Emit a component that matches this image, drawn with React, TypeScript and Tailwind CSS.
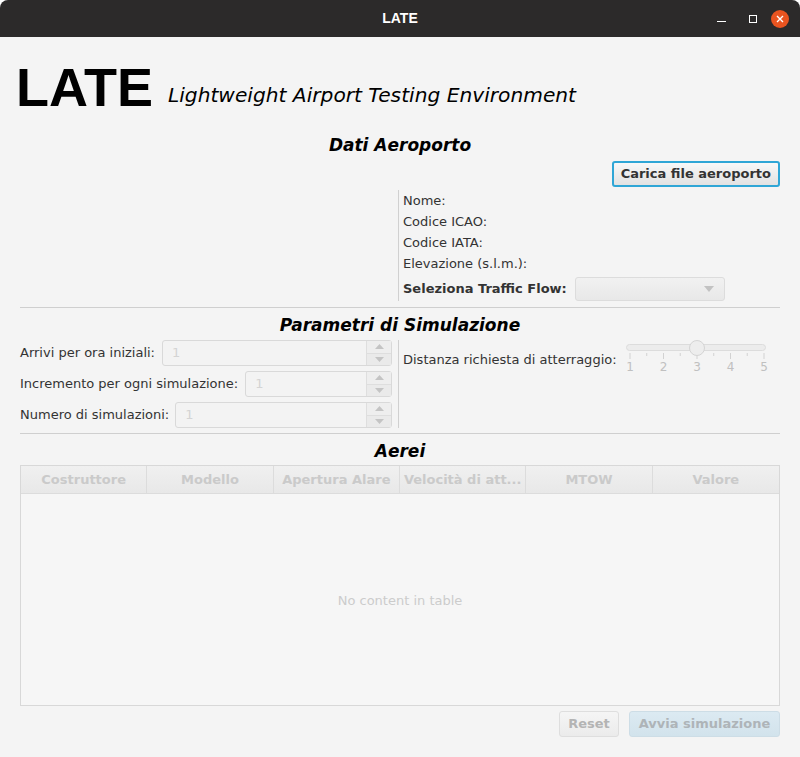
import React from 'react';

const body = "font-['DejaVu_Sans',sans-serif]";

function SpinnerBox({ className }: { className: string }) {
    return (
        <div className={`flex h-[26px] rounded-[3px] border border-[#d9d9d9] bg-[#f3f3f3] ${className}`}>
            <div className="flex flex-1 items-center pl-[9px] text-[13px] text-[#d4d4d4]">1</div>
            <div className="flex w-[25px] flex-col border-l border-[#dedede]">
                <div className="flex flex-1 items-center justify-center border-b border-[#dedede] bg-[#eeeeee]">
                    <svg width="9" height="5" viewBox="0 0 9 5"><path d="M0 5 L4.5 0 L9 5 Z" fill="#c4c4c4" /></svg>
                </div>
                <div className="flex flex-1 items-center justify-center bg-[#eaeaea]">
                    <svg width="9" height="5" viewBox="0 0 9 5"><path d="M0 0 L4.5 5 L9 0 Z" fill="#c4c4c4" /></svg>
                </div>
            </div>
        </div>
    );
}

function SectionTitle({ children }: { children: React.ReactNode }) {
    return (
        <div className="h-[20px] text-center text-[17px] leading-[20px] font-bold italic text-black">{children}</div>
    );
}

const columns = ['Costruttore', 'Modello', 'Apertura Alare', 'Velocità di att...', 'MTOW', 'Valore'];

export default function App() {
    return (
        <div className={`flex h-[757px] w-[800px] flex-col overflow-hidden rounded-t-[8px] bg-[#f4f4f4] ${body}`}>
            {/* Title bar */}
            <div className="relative flex h-[37px] shrink-0 items-center justify-center bg-[#2c2a2a]">
                <span className="font-['Liberation_Sans',sans-serif] text-[14px] font-bold text-white">LATE</span>
                <div className="absolute right-[11px] top-0 flex h-[37px] items-center">
                    <div className="flex w-[32px] justify-center">
                        <div className="mt-[6px] h-[1.5px] w-[9px] bg-white" />
                    </div>
                    <div className="flex w-[32px] justify-center">
                        <div className="h-[8px] w-[8px] border border-white" />
                    </div>
                    <div className="ml-[2px] flex h-[18px] w-[18px] items-center justify-center rounded-full bg-[#e95420]">
                        <svg width="8" height="8" viewBox="0 0 8 8">
                            <path d="M1 1 L7 7 M7 1 L1 7" stroke="white" strokeWidth="1.4" />
                        </svg>
                    </div>
                </div>
            </div>

            <div className="flex flex-1 flex-col px-5 text-[13px] text-[#333333]">
                {/* Header */}
                <div className="mt-[23px] flex items-end">
                    <span className="-ml-[4px] font-['Liberation_Sans',sans-serif] text-[54px] leading-[54px] font-bold text-black">LATE</span>
                    <span className="mb-[7px] ml-[15px] text-[20.2px] leading-[24px] italic text-black">Lightweight Airport Testing Environment</span>
                </div>

                {/* Dati Aeroporto */}
                <div className="mt-[21px]">
                    <SectionTitle>Dati Aeroporto</SectionTitle>
                </div>
                <div className="mt-[6px] flex justify-end">
                    <button className="h-[26px] rounded-[3px] border-2 border-[#2fa6d6] bg-gradient-to-b from-[#f8f8f8] to-[#e2e2e2] px-[7px] text-[13px] font-bold text-[#333333]">
                        Carica file aeroporto
                    </button>
                </div>
                <div className="mt-[3px] flex">
                    <div className="w-[378px]" />
                    <div className="flex flex-col border-l border-[#d0d0d0] pl-[4px]">
                        <div className="h-[21px] leading-[21px]">Nome:</div>
                        <div className="h-[21px] leading-[21px]">Codice ICAO:</div>
                        <div className="h-[21px] leading-[21px]">Codice IATA:</div>
                        <div className="h-[21px] leading-[21px]">Elevazione (s.l.m.):</div>
                        <div className="mt-[3px] flex items-center">
                            <span className="font-bold">Seleziona Traffic Flow:</span>
                            <div className="ml-[8px] flex h-[24px] w-[150px] items-center justify-end rounded-[3px] border border-[#dcdcdc] bg-gradient-to-b from-[#f1f1f1] to-[#e8e8e8] pr-[10px]">
                                <svg width="10" height="6" viewBox="0 0 10 6"><path d="M0 0 L5 6 L10 0 Z" fill="#c2c2c2" /></svg>
                            </div>
                        </div>
                    </div>
                </div>
                <div className="mt-[6px] h-px bg-[#cfcfcf]" />

                {/* Parametri di Simulazione */}
                <div className="mt-[7px]">
                    <SectionTitle>Parametri di Simulazione</SectionTitle>
                </div>
                <div className="mt-[5px] flex">
                    <div className="flex w-[372px] flex-col gap-[5px]">
                        <div className="flex items-center">
                            <span>Arrivi per ora iniziali:</span>
                            <SpinnerBox className="ml-[7px] flex-1" />
                        </div>
                        <div className="flex items-center">
                            <span>Incremento per ogni simulazione:</span>
                            <SpinnerBox className="ml-[7px] flex-1" />
                        </div>
                        <div className="flex items-center">
                            <span>Numero di simulazioni:</span>
                            <SpinnerBox className="ml-[6px] flex-1" />
                        </div>
                    </div>
                    <div className="w-[6px]" />
                    <div className="flex flex-1 border-l border-[#d0d0d0] pl-[4px]">
                        <span className="mt-[10px] h-[20px] leading-[20px]">Distanza richiesta di atterraggio:</span>
                        <div className="ml-[9px] w-[142px]">
                            <svg width="142" height="36" viewBox="0 0 142 36">
                                <rect x="0.5" y="4.5" width="139" height="6" rx="3" fill="#ececec" stroke="#dcdcdc" />
                                {[4, 37.5, 71, 104.5, 138].map((x) => (
                                    <line key={x} x1={x} y1="13" x2={x} y2="19" stroke="#d2d2d2" />
                                ))}
                                {[20.75, 54.25, 87.75, 121.25].map((x) => (
                                    <line key={x} x1={x} y1="13" x2={x} y2="16" stroke="#d2d2d2" />
                                ))}
                                <circle cx="71" cy="8" r="7.5" fill="#ededed" stroke="#d4d4d4" />
                                {[1, 2, 3, 4, 5].map((n, i) => (
                                    <text key={n} x={4 + i * 33.5} y="31" textAnchor="middle" fontSize="12" fill="#c0c0c0" fontFamily="DejaVu Sans">{n}</text>
                                ))}
                            </svg>
                        </div>
                    </div>
                </div>
                <div className="mt-[5px] h-px bg-[#cfcfcf]" />

                {/* Aerei */}
                <div className="mt-[7px]">
                    <SectionTitle>Aerei</SectionTitle>
                </div>
                <div className="mt-[4px] flex h-[241px] flex-col border border-[#d8d8d8] bg-[#f6f6f6]">
                    <div className="grid h-[28px] grid-cols-6 border-b border-[#dcdcdc] bg-gradient-to-b from-[#f0f0f0] to-[#e8e8e8]">
                        {columns.map((c, i) => (
                            <div
                                key={c}
                                className={`flex items-center justify-center overflow-hidden whitespace-nowrap pt-[1px] font-bold text-[#cacaca] ${i < 5 ? 'border-r border-[#dcdcdc]' : ''}`}
                            >
                                {c}
                            </div>
                        ))}
                    </div>
                    <div className="flex flex-1 items-center justify-center pt-[2px] text-[#cccccc]">No content in table</div>
                </div>
                <div className="mt-[5px] flex justify-end gap-[10px]">
                    <button className="h-[26px] w-[60px] rounded-[3px] border border-[#dedede] bg-gradient-to-b from-[#f5f5f5] to-[#ebebeb] text-[13px] font-bold text-[#b4b4b4]">
                        Reset
                    </button>
                    <button className="h-[26px] w-[151px] rounded-[3px] border border-[#cddde6] bg-gradient-to-b from-[#dceaf2] to-[#d2e3ec] text-[13px] font-bold text-[#aeb4b8]">
                        Avvia simulazione
                    </button>
                </div>
            </div>
        </div>
    );
}
